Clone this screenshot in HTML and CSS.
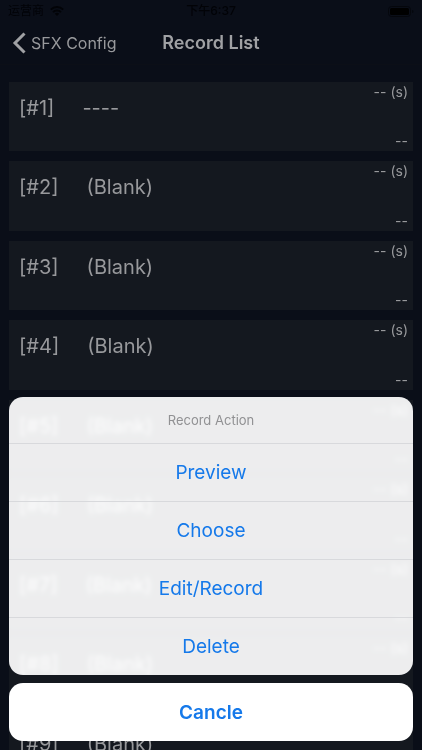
FILE: index.html
```html
<!DOCTYPE html>
<html lang="en">
<head>
<meta charset="utf-8">
<meta name="viewport" content="width=device-width, initial-scale=1">
<title>Record List</title>
<link rel="stylesheet" href="styles.css">
</head>
<body>
<div class="screen">
  <div class="status">
    <div class="carrier"><span lang="zh">运营商</span>
      <svg width="14" height="10" viewBox="0 0 14 10" aria-hidden="true"><g fill="none" stroke="#020307" stroke-width="2"><path d="M.8 3.6a8.8 8.8 0 0 1 12.4 0"/><path d="M3 6.1a5.7 5.7 0 0 1 8 0"/></g><path d="M4.8 7.7a3.2 3.2 0 0 1 4.4 0L7 10z" fill="#020307"/></svg>
    </div>
    <span class="time" lang="zh">下午6:37</span>
    <svg class="battery" width="26" height="11" viewBox="0 0 26 11" aria-hidden="true"><rect x=".5" y=".5" width="22" height="10" rx="3" fill="none" stroke="#05070c"/><rect x="2" y="2" width="19" height="7" rx="1.5" fill="#000"/><path d="M24 4v3q1.500-.4 1.500-1.500T24 4z" fill="#05070c"/></svg>
  </div>
  <header class="nav">
    <a class="back" href="#"><svg width="14" height="22" viewBox="0 0 14 22" aria-hidden="true"><path d="M12.500 1.500 3 11l9.500 9.500" fill="none" stroke="#a0a1a4" stroke-width="3"/></svg>SFX Config</a>
    <h1>Record List</h1>
  </header>
  <ul class="list">
    <li class="card"><div class="name"><span>[#1]</span><span>----</span></div><div class="meta"><span>-- (s)</span><span>--</span></div></li>
    <li class="card"><div class="name"><span>[#2]</span><span>(Blank)</span></div><div class="meta"><span>-- (s)</span><span>--</span></div></li>
    <li class="card"><div class="name"><span>[#3]</span><span>(Blank)</span></div><div class="meta"><span>-- (s)</span><span>--</span></div></li>
    <li class="card"><div class="name"><span>[#4]</span><span>(Blank)</span></div><div class="meta"><span>-- (s)</span><span>--</span></div></li>
    <li class="card"><div class="name"><span>[#5]</span><span>(Blank)</span></div><div class="meta"><span>-- (s)</span><span>--</span></div></li>
    <li class="card"><div class="name"><span>[#6]</span><span>(Blank)</span></div><div class="meta"><span>-- (s)</span><span>--</span></div></li>
    <li class="card"><div class="name"><span>[#7]</span><span>(Blank)</span></div><div class="meta"><span>-- (s)</span><span>--</span></div></li>
    <li class="card"><div class="name"><span>[#8]</span><span>(Blank)</span></div><div class="meta"><span>-- (s)</span><span>--</span></div></li>
    <li class="card"><div class="name"><span>[#9]</span><span>(Blank)</span></div><div class="meta"><span>-- (s)</span><span>--</span></div></li>
  </ul>
</div>
<div class="sheet" role="dialog" aria-labelledby="sheet-title">
  <div class="actions">
    <h2 id="sheet-title">Record Action</h2>
    <button type="button">Preview</button>
    <button type="button">Choose</button>
    <button type="button">Edit/Record</button>
    <button type="button">Delete</button>
  </div>
  <button type="button" class="cancel">Cancle</button>
</div>
</body>
</html>
```
FILE: styles.css
```css
* {
  box-sizing: border-box;
}

body {
  margin: 0;
  background: #0a0e18;
  color: #98999c;
  font-family: Inter, "Noto Sans CJK SC", sans-serif;
}

.screen {
  height: 100vh;
  overflow: hidden;
}

.status {
  display: grid;
  grid-template-columns: 1fr auto 1fr;
  align-items: center;
  height: 22px;
  padding: 0 8px;
  color: #020307;
  font-size: 12px;
  line-height: 20px;
}

.carrier {
  display: flex;
  align-items: center;
  gap: 6px;
}

.time {
  font-weight: 500;
}

.battery {
  justify-self: end;
}

.nav {
  display: grid;
  grid-template-columns: 1fr auto 1fr;
  align-items: center;
  height: 43px;
  padding: 0 12px;
  border-bottom: 1px solid #0c0f17;
}

.back {
  display: flex;
  align-items: center;
  gap: 5px;
  color: #98999c;
  font-size: 16px;
  line-height: 22px;
  text-decoration: none;
}

.nav h1 {
  margin: 0;
  color: #a0a1a4;
  font-size: 18px;
  font-weight: 600;
  line-height: 22px;
}

.list {
  display: grid;
  grid-template-rows: repeat(9, 1fr);
  gap: 10px;
  min-height: 705px;
  margin: 17px 9px 0;
  padding: 0;
  list-style: none;
}

.card {
  display: flex;
  justify-content: space-between;
  padding: 0 5px 0 10px;
  background: #14181f;
}

.name {
  display: flex;
  gap: 28px;
  padding-top: 12px;
  font-size: 20px;
  line-height: 28px;
}

.meta {
  display: flex;
  flex-direction: column;
  justify-content: space-between;
  align-items: flex-end;
  font-size: 14px;
  line-height: 20px;
}

.sheet {
  position: fixed;
  right: 9px;
  bottom: 9px;
  left: 9px;
  display: grid;
  gap: 8px;
}

.actions {
  overflow: hidden;
  border-radius: 14px;
  background: rgba(255, 255, 255, 0.92);
  backdrop-filter: blur(2px) brightness(1.5);
}

.actions h2 {
  margin: 0;
  color: #919193;
  font-size: 13px;
  font-weight: 400;
  line-height: 46px;
  text-align: center;
}

.sheet button {
  display: block;
  width: 100%;
  height: 58px;
  padding: 0;
  border: 0;
  border-top: 1px solid #d8d9dc;
  background: transparent;
  color: #1579ea;
  font-family: inherit;
  font-size: 19px;
  line-height: 24px;
}

.sheet .cancel {
  padding-top: 2px;
  border-top: 0;
  border-radius: 14px;
  background: #fff;
  font-weight: 600;
}
```
